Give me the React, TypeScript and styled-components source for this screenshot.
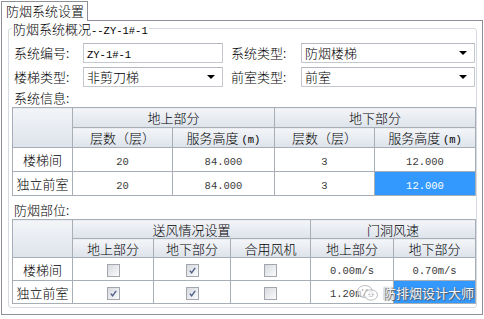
import React from 'react';
import styled, { createGlobalStyle } from 'styled-components';

const GlobalStyle = createGlobalStyle`
  html, body {
    margin: 0;
    padding: 0;
    background: #ffffff;
  }

  body {
    font-family: 'Noto Sans CJK SC', 'DejaVu Sans', sans-serif;
    font-weight: 300;
    color: #000000;
  }
`;

const CJK = `'Noto Sans CJK SC', 'DejaVu Sans', sans-serif`;
const MONO = `'Liberation Mono', 'Noto Sans CJK SC', monospace`;

const Window = styled.div`
  width: 484px;
  height: 319px;
  box-sizing: border-box;
  padding: 1px 1px 0 1px;
  background: #ffffff;
  overflow: hidden;
`;

const TabStrip = styled.div`
  display: flex;
`;

const Tab = styled.div`
  position: relative;
  z-index: 1;
  width: 87px;
  height: 20px;
  box-sizing: border-box;
  padding-left: 4px;
  border: 1px solid #8d9096;
  border-bottom: none;
  background: #ffffff;
  font-family: ${CJK};
  font-size: 13px;
  line-height: 18px;
  white-space: nowrap;
`;

const Panel = styled.div`
  margin-top: -1px;
  width: 482px;
  box-sizing: border-box;
  padding: 0 5px 6px 6px;
  border: 1px solid #8d9096;
  background: #ffffff;
`;

const GroupBox = styled.fieldset`
  margin: 0;
  padding: 0 1px 3px 3px;
  border: 1px solid #d5dbe1;
  border-radius: 3px;
  min-width: 0;
`;

const Legend = styled.legend`
  height: 15px;
  padding: 0 1px;
  font-family: ${CJK};
  font-size: 13px;
  line-height: 15px;
  white-space: nowrap;
`;

const Mono = styled.span`
  font-family: ${MONO};
  font-size: 10.5px;
  font-weight: normal;
  line-height: 12px;
  vertical-align: baseline;
`;

const FormGrid = styled.div`
  display: grid;
  grid-template-columns: 71px 140px 78px 174px;
  grid-auto-rows: 20px;
  row-gap: 4px;
  margin-top: 7px;
`;

const Label = styled.div<{ $indent: number }>`
  padding-left: ${(p) => p.$indent}px;
  font-family: ${CJK};
  font-size: 13px;
  line-height: 20px;
  white-space: nowrap;
`;

const Field = styled.div`
  position: relative;
  height: 20px;
  box-sizing: border-box;
  padding-left: 3px;
  border: 1px solid #c5c9cf;
  border-top-color: #b5b9bf;
  background: #ffffff;
  font-family: ${CJK};
  font-size: 13px;
  line-height: 18px;
  white-space: nowrap;
  overflow: hidden;
`;

const Arrow = styled.span`
  position: absolute;
  right: 7px;
  top: 7px;
  width: 0;
  height: 0;
  border-left: 4px solid transparent;
  border-right: 4px solid transparent;
  border-top: 4px solid #000000;
`;

const SectionLabel = styled.div<{ $top: number }>`
  height: 17px;
  margin-top: ${(p) => p.$top}px;
  margin-left: 2px;
  font-family: ${CJK};
  font-size: 13px;
  line-height: 17px;
`;

const TableWrap = styled.div`
  position: relative;
  margin-top: 1px;
`;

const Grid = styled.table`
  width: 463px;
  table-layout: fixed;
  border-collapse: collapse;
  border: 1px solid #8f959c;
`;

const Th = styled.th<{ $h: number }>`
  height: ${(p) => p.$h}px;
  padding: 0;
  border: 1px solid #a8aeb6;
  background: linear-gradient(#f3f5f8, #dde3eb);
  font-family: ${CJK};
  font-size: 13px;
  font-weight: 300;
  line-height: 15px;
  text-align: center;
  white-space: nowrap;
  overflow: hidden;
`;

const Td = styled.td<{ $h: number; $selected?: boolean }>`
  height: ${(p) => p.$h}px;
  padding: 0;
  border: 1px solid #a8aeb6;
  background: ${(p) => (p.$selected ? '#3399ff' : '#ffffff')};
  color: ${(p) => (p.$selected ? '#ffffff' : '#3a3a3a')};
  font-size: 13px;
  line-height: 15px;
  text-align: center;
  white-space: nowrap;
  overflow: hidden;
`;

const RowHead = styled.span`
  font-family: ${CJK};
  font-size: 13px;
  color: #000000;
`;

const Box = styled.span`
  display: inline-flex;
  align-items: center;
  justify-content: center;
  width: 11px;
  height: 11px;
  vertical-align: middle;
  border: 1px solid #a3a7ad;
  background: linear-gradient(135deg, #d6d9de, #fbfbfc);

  svg {
    display: block;
  }
`;

const Watermark = styled.div`
  position: absolute;
  right: 1px;
  bottom: 2px;
  display: flex;
  align-items: center;
  gap: 3px;
  pointer-events: none;
`;

const WatermarkText = styled.span`
  font-family: ${CJK};
  font-size: 13px;
  font-weight: normal;
  line-height: 16px;
  color: #f4f8ff;
  text-shadow: 0 0 1px #4a4a4a, 1px 1px 1px #5a5a5a;
  white-space: nowrap;
`;

const Check = ({ on }: { on: boolean }) => (
  <Box>
    {on && (
      <svg width="9" height="9" viewBox="0 0 9 9">
        <path d="M1.8 4.6 L3.6 6.8 L7.2 1.8" fill="none" stroke="#50608a" strokeWidth="1.4" />
      </svg>
    )}
  </Box>
);

const WeChatIcon = () => (
  <svg width="24" height="18" viewBox="0 0 24 18">
    <ellipse cx="9" cy="7.5" rx="7.5" ry="6" fill="rgba(255,255,255,0.6)" stroke="#b9bcc0" strokeWidth="1" />
    <ellipse cx="15" cy="11" rx="6.5" ry="5.2" fill="rgba(255,255,255,0.7)" stroke="#b9bcc0" strokeWidth="1" />
    <circle cx="6.5" cy="6" r="0.9" fill="#b0b3b7" />
    <circle cx="11" cy="6" r="0.9" fill="#b0b3b7" />
    <circle cx="13" cy="10.5" r="0.8" fill="#b0b3b7" />
    <circle cx="17" cy="10.5" r="0.8" fill="#b0b3b7" />
  </svg>
);

const systemRows = [
  { name: '楼梯间', upFloors: '20', upHeight: '84.000', downFloors: '3', downHeight: '12.000', selected: false },
  { name: '独立前室', upFloors: '20', upHeight: '84.000', downFloors: '3', downHeight: '12.000', selected: true },
];

const smokeRows = [
  { name: '楼梯间', up: false, down: true, shared: false, speedUp: '0.00m/s', speedDown: '0.70m/s', selected: false },
  { name: '独立前室', up: true, down: true, shared: false, speedUp: '1.20m/s', speedDown: '', selected: true },
];

const App = () => {
  return (
    <Window>
      <GlobalStyle />
      <TabStrip>
        <Tab>防烟系统设置</Tab>
      </TabStrip>

      <Panel>
        <GroupBox>
          <Legend>
            防烟系统概况<Mono>--ZY-1#-1</Mono>
          </Legend>

          <FormGrid>
            <Label $indent={2}>系统编号:</Label>
            <Field>
              <Mono>ZY-1#-1</Mono>
            </Field>
            <Label $indent={8}>系统类型:</Label>
            <Field>
              防烟楼梯
              <Arrow />
            </Field>

            <Label $indent={2}>楼梯类型:</Label>
            <Field>
              非剪刀梯
              <Arrow />
            </Field>
            <Label $indent={8}>前室类型:</Label>
            <Field>
              前室
              <Arrow />
            </Field>
          </FormGrid>

          <SectionLabel $top={2}>系统信息:</SectionLabel>
          <TableWrap>
            <Grid>
              <colgroup>
                <col style={{ width: 60 }} />
                <col style={{ width: 100 }} />
                <col style={{ width: 102 }} />
                <col style={{ width: 100 }} />
                <col style={{ width: 101 }} />
              </colgroup>
              <thead>
                <tr>
                  <Th $h={19} rowSpan={2} />
                  <Th $h={19} colSpan={2}>
                    地上部分
                  </Th>
                  <Th $h={19} colSpan={2}>
                    地下部分
                  </Th>
                </tr>
                <tr>
                  <Th $h={19}>层数（层）</Th>
                  <Th $h={19}>
                    服务高度 <Mono>(m)</Mono>
                  </Th>
                  <Th $h={19}>层数（层）</Th>
                  <Th $h={19}>
                    服务高度 <Mono>(m)</Mono>
                  </Th>
                </tr>
              </thead>
              <tbody>
                {systemRows.map((row) => (
                  <tr key={row.name}>
                    <Td $h={23}>
                      <RowHead>{row.name}</RowHead>
                    </Td>
                    <Td $h={23}>
                      <Mono>{row.upFloors}</Mono>
                    </Td>
                    <Td $h={23}>
                      <Mono>{row.upHeight}</Mono>
                    </Td>
                    <Td $h={23}>
                      <Mono>{row.downFloors}</Mono>
                    </Td>
                    <Td $h={23} $selected={row.selected}>
                      <Mono>{row.downHeight}</Mono>
                    </Td>
                  </tr>
                ))}
              </tbody>
            </Grid>
          </TableWrap>

          <SectionLabel $top={5}>防烟部位:</SectionLabel>
          <TableWrap>
            <Grid>
              <colgroup>
                <col style={{ width: 60 }} />
                <col style={{ width: 81 }} />
                <col style={{ width: 77 }} />
                <col style={{ width: 80 }} />
                <col style={{ width: 83 }} />
                <col style={{ width: 82 }} />
              </colgroup>
              <thead>
                <tr>
                  <Th $h={18} rowSpan={2} />
                  <Th $h={18} colSpan={3}>
                    送风情况设置
                  </Th>
                  <Th $h={18} colSpan={2}>
                    门洞风速
                  </Th>
                </tr>
                <tr>
                  <Th $h={18}>地上部分</Th>
                  <Th $h={18}>地下部分</Th>
                  <Th $h={18}>合用风机</Th>
                  <Th $h={18}>地上部分</Th>
                  <Th $h={18}>地下部分</Th>
                </tr>
              </thead>
              <tbody>
                {smokeRows.map((row) => (
                  <tr key={row.name}>
                    <Td $h={22}>
                      <RowHead>{row.name}</RowHead>
                    </Td>
                    <Td $h={22}>
                      <Check on={row.up} />
                    </Td>
                    <Td $h={22}>
                      <Check on={row.down} />
                    </Td>
                    <Td $h={22}>
                      <Check on={row.shared} />
                    </Td>
                    <Td $h={22}>
                      <Mono>{row.speedUp}</Mono>
                    </Td>
                    <Td $h={22} $selected={row.selected}>
                      <Mono>{row.speedDown}</Mono>
                    </Td>
                  </tr>
                ))}
              </tbody>
            </Grid>
            <Watermark>
              <WeChatIcon />
              <WatermarkText>防排烟设计大师</WatermarkText>
            </Watermark>
          </TableWrap>
        </GroupBox>
      </Panel>
    </Window>
  );
};

export default App;
